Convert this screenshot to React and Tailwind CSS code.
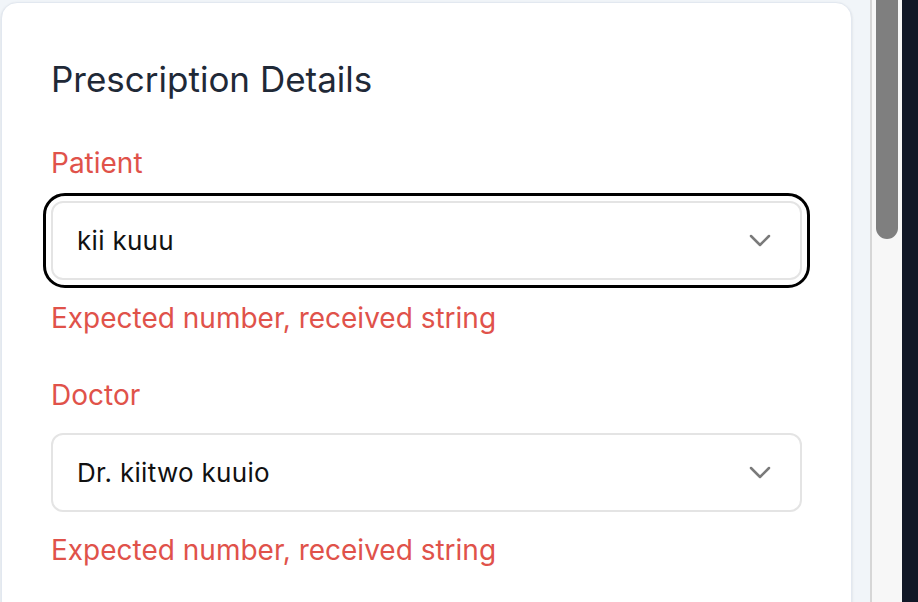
const FIELDS = [
  { label: 'Patient', value: 'kii kuuu', focused: true },
  { label: 'Doctor', value: 'Dr. kiitwo kuuio', focused: false },
]

function Chevron() {
  return (
    <svg width="22" height="13" viewBox="0 0 22 13" fill="none" className="text-[#7a7a7a]">
      <path d="M2 2l9 9 9-9" stroke="currentColor" strokeWidth="2.5" strokeLinecap="round" strokeLinejoin="round" />
    </svg>
  )
}

function Field({ label, value, focused, first }) {
  return (
    <div className={first ? 'mt-[48px]' : 'mt-[45px]'}>
      <label className="block text-[28px] leading-[32px] text-[#e0524a]">{label}</label>
      <div
        className={`mt-[22px] rounded-[14px] ${
          focused ? 'outline-[3px] outline-black outline-offset-[5px] outline' : ''
        }`}
      >
        <div className="flex h-[79px] items-center justify-between rounded-[12px] border-2 border-[#e4e4e4] bg-white pl-[24px] pr-[29px]">
          <span className="text-[26px] tracking-[0.3px] text-[#111111]">{value}</span>
          <Chevron />
        </div>
      </div>
      <p className="mt-[22px] text-[28px] leading-[32px] text-[#e0524a]">Expected number, received string</p>
    </div>
  )
}

export default function App() {
  return (
    <div
      className="flex h-[602px] w-[918px] overflow-hidden bg-[#f1f5f9]"
      style={{ fontFamily: 'Inter, "Noto Sans", sans-serif' }}
    >
      <div className="w-[870px] pl-[1px] pt-[2px]">
        <div className="h-[640px] w-[851px] rounded-[16px] border border-[#e2e8f0] bg-white px-[49px] pt-[56px] shadow-sm">
          <h2 className="text-[35px] leading-[40px] text-[#1f2937]">Prescription Details</h2>
          {FIELDS.map((f, i) => (
            <Field key={f.label} first={i === 0} {...f} />
          ))}
        </div>
      </div>
      <div className="w-[32px] border-l-2 border-[#d6d6d6] bg-[#f7f7f7] px-[4px]">
        <div className="h-[239px] rounded-b-full bg-[#7f7f7f]" />
      </div>
      <div className="flex-1 bg-[#111827]" />
    </div>
  )
}
